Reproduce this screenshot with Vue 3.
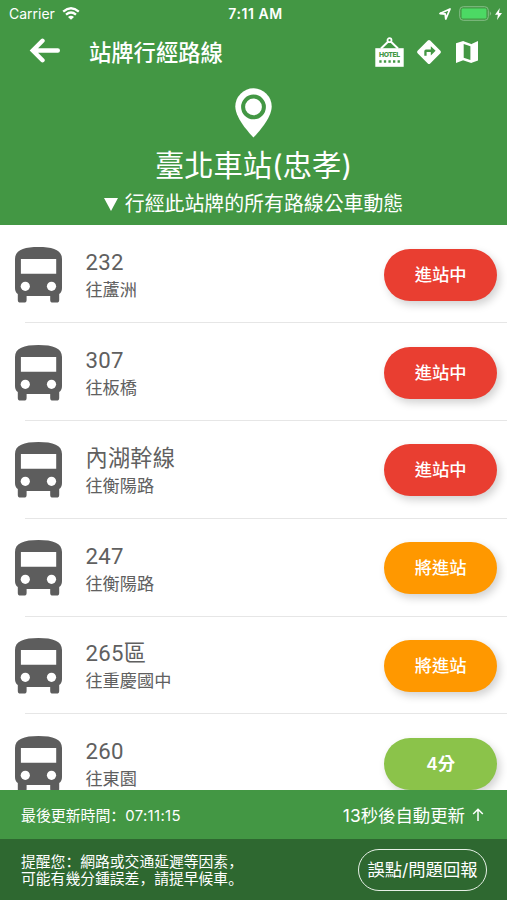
<script setup>
import { ref } from 'vue'

const station = ref('臺北車站(忠孝)')
const updatedAt = ref('07:11:15')
const countdown = ref(13)

const routes = ref([
  { name: '232', dest: '往蘆洲', status: '進站中', type: 'arriving' },
  { name: '307', dest: '往板橋', status: '進站中', type: 'arriving' },
  { name: '內湖幹線', dest: '往衡陽路', status: '進站中', type: 'arriving' },
  { name: '247', dest: '往衡陽路', status: '將進站', type: 'soon' },
  { name: '265區', dest: '往重慶國中', status: '將進站', type: 'soon' },
  { name: '260', dest: '往東園', status: '4分', type: 'waiting' },
])
</script>

<template>
  <div class="screen">
    <header class="header">
      <div class="status">
        <div class="status_side">
          <span>Carrier</span>
          <svg class="wifi" width="18" height="13" viewBox="0 0 18 13">
            <path d="M1.2 4.6Q9-2.2 16.8 4.6M4 7.7Q9 3.4 14 7.7" fill="none" stroke="#fff" stroke-width="2.3" />
            <path d="M6 9.9Q9 7.5 12 9.9L9 12.8Z" fill="#fff" />
          </svg>
        </div>
        <span class="status_time">7:11 AM</span>
        <div class="status_side right">
          <svg width="12" height="12" viewBox="0 0 12 12">
            <path d="M1 5.5 11 1 6.8 11 6.2 6Z" fill="none" stroke="#fff" stroke-width="1.8" stroke-linejoin="round" />
          </svg>
          <svg class="battery" width="33" height="15" viewBox="0 0 33 15">
            <rect x="0.7" y="0.7" width="28.6" height="13.6" rx="3.6" fill="none" stroke="#86bd87" stroke-width="1" />
            <rect x="2.6" y="2.6" width="24.8" height="9.8" rx="1.2" fill="#4cd964" />
            <path d="M30.8 5.2q2.6 2.3 0 4.6z" fill="#86bd87" />
          </svg>
          <svg width="7" height="12" viewBox="0 0 7 12">
            <path d="M4.8 0 0 6.8h2.9L2 12 7 4.9H4z" fill="#fff" />
          </svg>
        </div>
      </div>

      <div class="toolbar">
        <svg class="back" width="31" height="26" viewBox="0 0 31 26">
          <path d="M13.5 2.8 3.8 12.5l9.7 9.7M4.5 12.5H28.8" fill="none" stroke="#fff" stroke-width="4.4" stroke-linecap="round" />
        </svg>
        <h1 class="title">站牌行經路線</h1>
        <div class="actions">
          <svg width="29" height="30" viewBox="0 0 29 30">
            <circle cx="14.5" cy="3.2" r="2" fill="none" stroke="#fff" stroke-width="1.8" />
            <path d="M13 4.8 6 11.5M16 4.8l7 6.7" stroke="#fff" stroke-width="2" />
            <rect x="0.3" y="11.2" width="28.4" height="18.6" fill="#fff" />
            <text x="14.5" y="20.4" text-anchor="middle" class="hotel" textLength="21">HOTEL</text>
            <path d="M4.3 24.5h20.6" stroke="#439744" stroke-width="2.4" stroke-dasharray="2.3 2.27" />
          </svg>
          <svg width="26" height="26" viewBox="0 0 26 26">
            <path d="M11.8 1.6q1.2-1.2 2.4 0l10.2 10.2q1.2 1.2 0 2.4L14.2 24.4q-1.2 1.2-2.4 0L1.6 14.2q-1.2-1.2 0-2.4z" fill="#fff" />
            <path d="M14.8 7.2 19.6 11.8l-4.8 4.6v-3.5h-4.2v3.8H8.3v-4.4q0-1.7 1.7-1.7h4.8z" fill="#439744" />
          </svg>
          <svg width="24" height="24" viewBox="0 0 24 24">
            <path d="M1 3.2 8.2 1v19.2L1 23zM16 4.2 23 1v19.4L16 23z" fill="#fff" />
            <path d="M8 1 16.2 4v19L8 20.2z" fill="#fff" />
            <path d="M8.7 3.9 15.4 6.2v13.9l-6.7-2.3z" fill="#439744" />
          </svg>
        </div>
      </div>

      <div class="stop">
        <svg class="pin" width="37" height="50" viewBox="0 0 37 50">
          <path d="M18.5.3A18.2 18.2 0 0 0 .3 18.5C.3 31.5 18.5 49.5 18.5 49.5S36.7 31.5 36.7 18.5A18.2 18.2 0 0 0 18.5.3z" fill="#fff" />
          <circle cx="18.5" cy="18.9" r="10.4" fill="none" stroke="#439744" stroke-width="4" />
        </svg>
        <h2 class="stop_name">{{ station }}</h2>
        <p class="stop_hint">
          <svg width="14" height="13" viewBox="0 0 14 13"><path d="M0 0h14L7 13z" fill="#fff" /></svg>
          <span>行經此站牌的所有路線公車動態</span>
        </p>
      </div>
    </header>

    <main class="list">
      <div v-for="r in routes" :key="r.name" class="row">
        <svg class="bus" width="47" height="56" viewBox="0 0 47 56">
          <path
            d="M0 12C0 3 9 0 23.5 0S47 3 47 12V41q0 4-2.8 6v6q0 2.6-2.6 2.6h-3.8q-2.6 0-2.6-2.6v-4H11.6v4q0 2.6-2.6 2.6H5.4q-2.6 0-2.6-2.6v-6Q0 45 0 41z"
            fill="#5d5d5d"
          />
          <path d="M5.9 11.9h35.3v14.8H5.9z" fill="#fff" />
          <circle cx="10.3" cy="39.3" r="4.6" fill="#fff" />
          <circle cx="36.5" cy="39.3" r="4.6" fill="#fff" />
        </svg>
        <div class="info">
          <div class="route">{{ r.name }}</div>
          <div class="dest">{{ r.dest }}</div>
        </div>
        <button type="button" class="badge" :class="r.type">{{ r.status }}</button>
      </div>
    </main>

    <section class="update">
      <span>最後更新時間：<span class="clock">{{ updatedAt }}</span></span>
      <span class="countdown">
        {{ countdown }}秒後自動更新
        <svg width="12" height="13" viewBox="0 0 12 13">
          <path d="M6 13V1.2M1.2 6 6 1.2 10.8 6" fill="none" stroke="#fff" stroke-width="1.5" />
        </svg>
      </span>
    </section>

    <footer class="notice">
      <div class="notice_text">
        <p>提醒您：網路或交通延遲等因素，</p>
        <p>可能有幾分鍾誤差，請提早候車。</p>
      </div>
      <button type="button" class="report">誤點/問題回報</button>
    </footer>
  </div>
</template>

<style>
body {
  background: #fff;
  overflow: hidden;
}
</style>

<style scoped>
.screen {
  display: flex;
  flex-direction: column;
  width: 507px;
  height: 900px;
  overflow: hidden;
  font-family: Inter, "Noto Sans CJK TC", sans-serif;
  background: #fff;
  color: #fff;
}
h1, h2, p {
  margin: 0;
  font-weight: 400;
}
svg {
  display: block;
  flex: none;
}
.header {
  flex: none;
  height: 225.4px;
  background: #439744;
}
.status {
  display: flex;
  align-items: center;
  height: 27px;
  padding: 0 5px 0 9px;
  font-size: 14px;
}
.status_side {
  display: flex;
  flex: 1;
  align-items: center;
  gap: 8px;
}
.status_side.right {
  justify-content: flex-end;
}
.battery {
  margin-right: -5px;
}
.wifi {
  margin-top: -1px;
  margin-left: -1px;
}
.status_time {
  font-weight: 600;
  letter-spacing: 0.55px;
}
.toolbar {
  display: flex;
  align-items: center;
  height: 50px;
  padding: 0 26px 0 29px;
}
.back {
  margin-top: -2px;
}
.title {
  margin-top: 1px;
  margin-left: 29px;
  font-size: 22.3px;
  font-weight: 500;
  line-height: 30px;
}
.actions {
  display: flex;
  align-items: center;
  gap: 13px;
  margin-left: auto;
}
.actions svg:first-child {
  margin-right: -1px;
}
.actions svg:last-child {
  margin-right: 2px;
}
.hotel {
  font-family: Inter, sans-serif;
  font-size: 6.8px;
  font-weight: 800;
  fill: #439744;
}
.stop {
  display: flex;
  flex-direction: column;
  align-items: center;
  padding-top: 11px;
}
.stop_name {
  margin-top: 9px;
  font-size: 29.3px;
  line-height: 38px;
}
.stop_hint {
  display: flex;
  align-items: center;
  gap: 7px;
  margin-top: 4px;
  font-size: 19.9px;
  line-height: 30px;
}
.list {
  flex: 1;
  min-height: 0;
  overflow: hidden;
}
.row {
  display: flex;
  align-items: center;
  box-sizing: border-box;
  height: 97.8px;
  padding: 1px 10px 0 15px;
  background: linear-gradient(#e6e6e6, #e6e6e6) 25px 100% / 100% 1px no-repeat;
}
.info {
  flex: 1;
  margin-left: 23.4px;
  color: #606060;
}
.route {
  font-family: Roboto, "Noto Sans CJK TC", sans-serif;
  font-size: 22.2px;
  line-height: 30px;
  letter-spacing: 0.3px;
}
.dest {
  font-size: 17.2px;
  line-height: 25px;
}
.badge {
  width: 112.6px;
  height: 52px;
  padding: 0;
  border: none;
  border-radius: 26px;
  box-shadow: 3px 4px 8px rgba(0, 0, 0, 0.18);
  color: #fff;
  font: 500 17.3px/52px Inter, "Noto Sans CJK TC", sans-serif;
}
.badge.arriving {
  background: #e93e31;
}
.badge.soon {
  background: #ff9800;
}
.badge.waiting {
  background: #8bc34a;
  font-weight: 600;
}
.update {
  display: flex;
  flex: none;
  align-items: center;
  justify-content: space-between;
  box-sizing: border-box;
  height: 49px;
  padding: 0 23px 1px 21px;
  background: #439744;
  font-family: Inter, "Noto Sans CJK SC", sans-serif;
  font-size: 14.9px;
}
.clock {
  letter-spacing: 0.35px;
}
.countdown {
  display: flex;
  align-items: center;
  gap: 7px;
  font-family: Inter, "Noto Sans CJK TC", sans-serif;
  font-size: 17.4px;
}
.notice {
  display: flex;
  flex: none;
  align-items: center;
  justify-content: space-between;
  box-sizing: border-box;
  height: 61px;
  padding: 0 20px 0 21px;
  background: #2e6830;
}
.notice_text {
  margin-top: -1px;
  font-family: "Noto Sans CJK SC", sans-serif;
  font-size: 14.8px;
  line-height: 17px;
}
.report {
  width: 129px;
  height: 42px;
  padding: 0;
  border: 1.4px solid #e6f0e6;
  border-radius: 21px;
  background: transparent;
  color: #fff;
  font: 400 17.3px/38px Inter, "Noto Sans CJK TC", sans-serif;
  white-space: nowrap;
}
</style>
